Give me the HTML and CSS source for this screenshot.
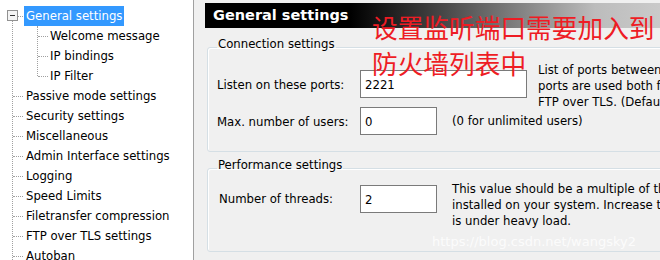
FILE: index.html
```html
<!DOCTYPE html>
<html lang="en">
<head>
    <meta charset="UTF-8">
    <meta name="viewport" content="width=device-width, initial-scale=1.0">
    <title>FileZilla Server Options</title>
    <link rel="stylesheet" href="styles.css">
</head>
<body>
    <div class="tree-panel">
        <ul class="tree">
            <li class="open">
                <span class="toggle"></span>
                <span class="node selected">General settings</span>
                <ul class="tree sub">
                    <li><span class="node">Welcome message</span></li>
                    <li><span class="node">IP bindings</span></li>
                    <li><span class="node">IP Filter</span></li>
                </ul>
            </li>
            <li><span class="node">Passive mode settings</span></li>
            <li><span class="node">Security settings</span></li>
            <li><span class="node">Miscellaneous</span></li>
            <li><span class="node">Admin Interface settings</span></li>
            <li><span class="node">Logging</span></li>
            <li><span class="node">Speed Limits</span></li>
            <li><span class="node">Filetransfer compression</span></li>
            <li><span class="node">FTP over TLS settings</span></li>
            <li><span class="node">Autoban</span></li>
        </ul>
    </div>

    <div class="main">
        <div class="page-title">General settings</div>

        <fieldset class="group">
            <legend>Connection settings</legend>
            <div class="row">
                <label class="row-label">Listen on these ports:</label>
                <input class="field wide" type="text" value="2221">
                <p class="hint ports">List of ports between 1 and 65535 that the server should listen on. These<br>ports are used both for plain FTP and<br>FTP over TLS. (Default: 21)</p>
            </div>
            <div class="row second">
                <label class="row-label">Max. number of users:</label>
                <input class="field short" type="text" value="0">
                <p class="hint">(0 for unlimited users)</p>
            </div>
        </fieldset>

        <fieldset class="group perf">
            <legend>Performance settings</legend>
            <div class="row top">
                <label class="row-label">Number of threads:</label>
                <input class="field short" type="text" value="2">
                <p class="hint threads">This value should be a multiple of the number of processors<br>installed on your system. Increase this value if your server<br>is under heavy load.</p>
            </div>
        </fieldset>
    </div>

    <div class="note">设置监听端口需要加入到<br>防火墙列表中</div>
    <div class="watermark">https://blog.csdn.net/wangsky2</div>
</body>
</html>
```

FILE: styles.css
```css
body, html {
    margin: 0;
    padding: 0;
    height: 100%;
    overflow: hidden;
}

body {
    display: flex;
    background-color: #f0f0f0;
    font-family: "DejaVu Sans Condensed", "Liberation Sans", sans-serif;
    font-size: 13px;
    color: #000;
    position: relative;
}

/* left tree */
.tree-panel {
    width: 194px;
    flex: none;
    background-color: #fff;
    border-right: 1px solid #a0a0a0;
    padding-top: 6px;
    box-sizing: border-box;
}

.tree {
    list-style: none;
    margin: 0 0 0 12px;
    padding: 0;
    border-left: 1px dotted #a0a0a0;
}

.tree li {
    position: relative;
}

.tree li::before {
    content: '';
    position: absolute;
    left: 0;
    top: 10px;
    width: 10px;
    border-top: 1px dotted #a0a0a0;
}

.tree-panel > .tree > li:first-child::after {
    content: '';
    position: absolute;
    left: -1px;
    top: 0;
    width: 1px;
    height: 5px;
    background-color: #fff;
}

.tree.sub {
    margin-left: 24px;
}

.tree.sub li:last-child::after {
    content: '';
    position: absolute;
    left: -1px;
    top: 11px;
    bottom: 0;
    width: 1px;
    background-color: #fff;
}

.node {
    display: inline-block;
    height: 20px;
    line-height: 20px;
    margin-left: 11px;
    padding: 0 2px;
    white-space: nowrap;
}

.tree.sub .node {
    margin-left: 10px;
}

.node.selected {
    background-color: #3399ff;
    color: #fff;
}

.toggle {
    position: absolute;
    left: -6px;
    top: 4px;
    width: 9px;
    height: 9px;
    border: 1px solid #919191;
    background-color: #f4f4f4;
    z-index: 1;
}

.toggle::after {
    content: '';
    position: absolute;
    left: 2px;
    top: 4px;
    width: 5px;
    height: 1px;
    background-color: #333;
}

/* right page */
.main {
    flex: none;
    width: 520px;
    margin-left: 11px;
    padding-top: 3px;
}

.page-title {
    height: 25px;
    line-height: 25px;
    padding-left: 8px;
    font-size: 14.5px;
    font-weight: bold;
    font-family: "DejaVu Sans", sans-serif;
    color: #fff;
    background: linear-gradient(to right, #000 0, #000 28%, #bcbcbc 75%, #d8d8d8 100%);
}

.group {
    margin: 8px 0 0 2px;
    padding: 12px 9px 16px 9px;
    border: 1px solid #d5dfe5;
    border-radius: 3px;
    box-shadow: inset 1px 1px 0 #fff;
}

.group legend {
    padding: 0 1px 6px 1px;
    line-height: 16px;
}

.group.perf {
    margin-top: 5px;
    padding-top: 6px;
    padding-bottom: 38px;
}

.row {
    display: flex;
    align-items: center;
    height: 28px;
}

.row.second {
    margin-top: 9px;
}

.row.top {
    align-items: flex-start;
}

.row-label {
    width: 143px;
    flex: none;
    white-space: nowrap;
}

.row.top .row-label {
    margin-top: 6px;
    padding-left: 2px;
    width: 141px;
}

.field {
    flex: none;
    height: 28px;
    box-sizing: border-box;
    border: 1px solid #7a7a7a;
    background-color: #fff;
    font-family: inherit;
    font-size: 13px;
    padding: 0 4px;
    margin: 0;
}

.field.wide {
    width: 167px;
}

.field.short {
    width: 77px;
}

.hint {
    margin: 0 0 0 15px;
    line-height: 16px;
    white-space: nowrap;
}

.hint.ports {
    margin-left: 11px;
    margin-top: 4px;
}

.hint.threads {
    margin-top: -4px;
}

/* annotation over the screenshot */
.note {
    position: absolute;
    left: 372px;
    top: 9px;
    font-family: "Noto Sans CJK SC", sans-serif;
    font-size: 25.7px;
    line-height: 36px;
    color: #ee1c24;
    white-space: nowrap;
}

.watermark {
    position: absolute;
    left: 432px;
    top: 234px;
    font-family: "DejaVu Sans", sans-serif;
    font-size: 13px;
    color: rgba(255, 255, 255, 0.8);
    white-space: nowrap;
}
```
